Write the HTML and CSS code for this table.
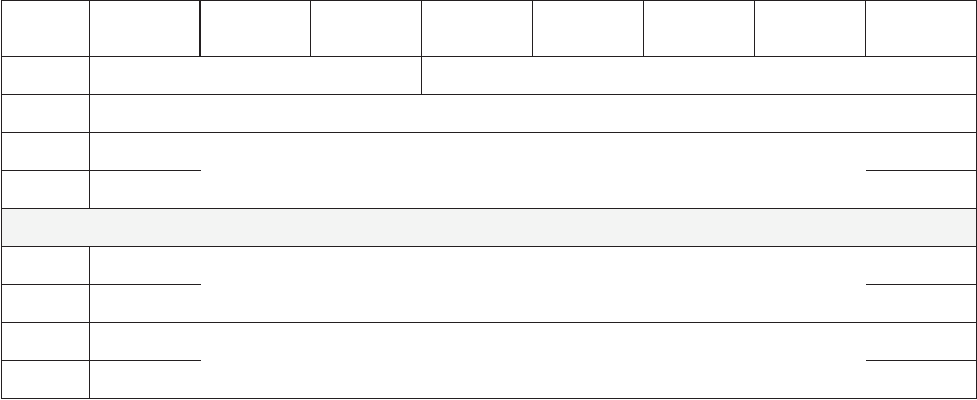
FILE: index.html
```html
<!DOCTYPE html>
<html lang="en">
<head>
<meta charset="utf-8">
<title>Grid sheet</title>
<link rel="stylesheet" href="styles.css">
</head>
<body>
<div class="page">
  <div class="sheet">
    <div class="cell head"></div>
    <div class="cell head thick"></div>
    <div class="cell head"></div>
    <div class="cell head"></div>
    <div class="cell head"></div>
    <div class="cell head"></div>
    <div class="cell head"></div>
    <div class="cell head"></div>
    <div class="cell head"></div>

    <div class="cell"></div>
    <div class="cell span-3"></div>
    <div class="cell span-5"></div>

    <div class="cell"></div>
    <div class="cell span-8"></div>

    <div class="cell"></div>
    <div class="cell open"></div>
    <div class="cell merged"></div>
    <div class="cell"></div>
    <div class="cell"></div>
    <div class="cell open"></div>
    <div class="cell"></div>

    <div class="cell band"></div>

    <div class="cell"></div>
    <div class="cell open"></div>
    <div class="cell merged"></div>
    <div class="cell"></div>
    <div class="cell"></div>
    <div class="cell open"></div>
    <div class="cell"></div>

    <div class="cell"></div>
    <div class="cell open"></div>
    <div class="cell merged"></div>
    <div class="cell"></div>
    <div class="cell"></div>
    <div class="cell open"></div>
    <div class="cell"></div>
  </div>
</div>
</body>
</html>
```

FILE: styles.css
```css
* {
  box-sizing: border-box;
}

html, body {
  margin: 0;
  padding: 0;
  background: #ffffff;
  font-family: "Liberation Sans", Arial, sans-serif;
}

.page {
  padding-left: 1px;
}

.sheet {
  display: grid;
  grid-template-columns: 88px 111px 110px 111px 111px 111px 111px 111px 111px;
  grid-template-rows: 56px repeat(9, 38px);
  width: 976px;
  border-top: 1px solid #231f20;
  border-left: 1px solid #231f20;
}

.cell {
  border-right: 1px solid #231f20;
  border-bottom: 1px solid #231f20;
  background: #ffffff;
}

.thick {
  border-right-width: 2px;
}

.span-3 {
  grid-column: span 3;
}

.span-5 {
  grid-column: span 5;
}

.span-8 {
  grid-column: span 8;
}

.open {
  border-right: none;
}

.merged {
  grid-column: span 6;
  grid-row: span 2;
  border-right: none;
}

.band {
  grid-column: span 9;
  background: #f3f4f3;
}
```
